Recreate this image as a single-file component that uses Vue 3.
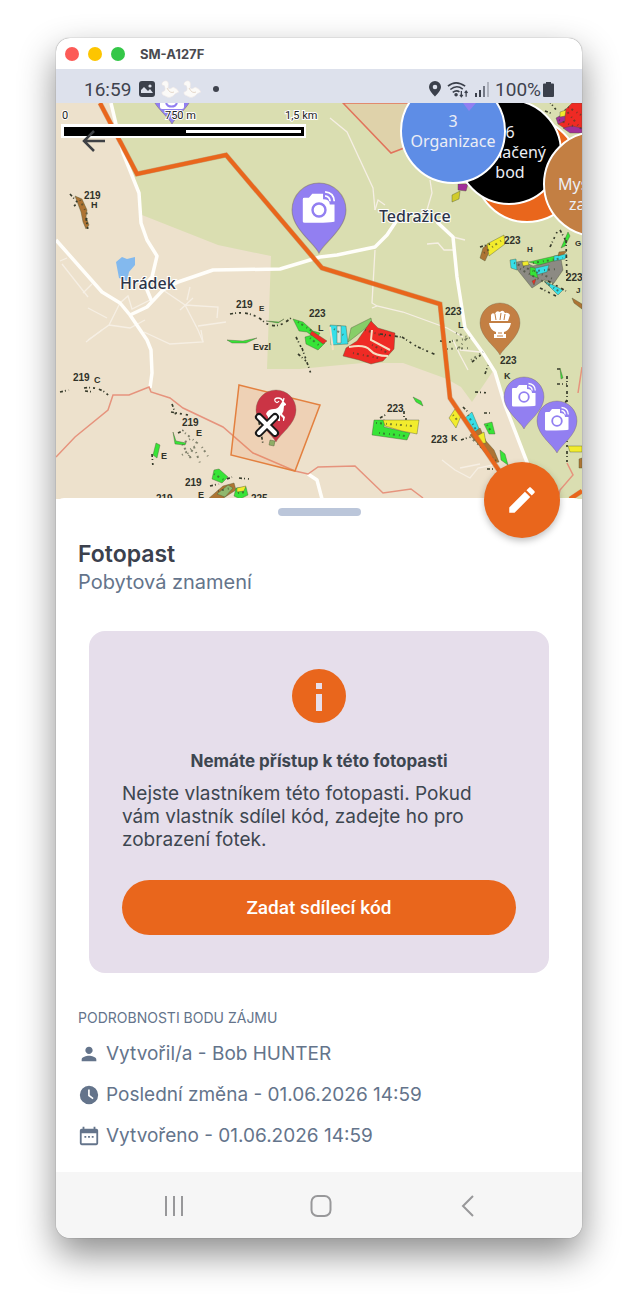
<template>
  <div class="desktop">
    <main class="window">
      <header class="titlebar">
        <span class="light red"></span>
        <span class="light yellow"></span>
        <span class="light green"></span>
        <h1>SM-A127F</h1>
      </header>

      <div class="statusbar">
        <div class="status-group">
          <span>16:59</span>
          <svg width="16" height="16" viewBox="0 0 16 16">
            <rect width="16" height="16" rx="3" fill="#3b404b" />
            <path d="M2 12V9l3-3 4 4 2-2 3 4z" fill="#dde1ec" />
            <circle cx="11" cy="5" r="1.6" fill="#dde1ec" />
          </svg>
          <svg v-for="n in 2" :key="n" class="bird" width="18" height="18" viewBox="0 0 18 18">
            <path d="M1 3Q4-1 7 2Q8 4 7 8Q9 10 12 7Q16 8 18 12Q14 13 12 16Q8 19 4 16Q0 15 1 12Q5 11 4 8Q4 5 1 5Z" fill="#fbfaf8" stroke="#ece5e2" stroke-width=".5" />
            <path d="M6 8Q9 14 13 12" fill="none" stroke="#e5d7c9" />
          </svg>
          <span class="dot"></span>
        </div>
        <div class="status-group right">
          <svg width="12" height="16" viewBox="0 0 12 16">
            <path d="M6 0a6 6 0 0 0-6 6c0 4 6 9.500 6 9.500S12 10 12 6a6 6 0 0 0-6-6zm0 8.300a2.300 2.300 0 1 1 0-4.600 2.300 2.300 0 0 1 0 4.600z" fill="#3b404b" />
          </svg>
          <svg width="22" height="17" viewBox="0 0 23 17" fill="none" stroke="#3b404b" stroke-width="1.700">
            <path d="M1 5Q9-2 19 5M3.500 8.500Q10 3 16.500 8M6 11.500Q10 8.500 13 11" />
            <circle cx="9.500" cy="14" r="1" fill="#3b404b" />
            <path d="M15 10v6M13.500 14l1.500 2 1.500-2M20 16v-6M18.500 12l1.500-2 1.500 2" stroke-width="1.300" />
          </svg>
          <svg width="14" height="15" viewBox="0 0 14 15">
            <path d="M0 11h2v4H0zM4 8h2v7H4z" fill="#3b404b" />
            <path d="M8 4h2v11H8z" fill="#747986" />
            <path d="M12 0h2v15h-2z" fill="#b0b4bf" />
          </svg>
          <span>100%</span>
          <svg class="battery" width="11" height="15" viewBox="0 0 11 15">
            <path d="M3 0h5v1.500h2q1 0 1 1V14q0 1-1 1H1q-1 0-1-1V2.500q0-1 1-1h2z" fill="#3b404b" />
          </svg>
        </div>
      </div>

      <section class="map">
        <svg class="map-canvas" viewBox="56 103 526 396">
          <rect x="56" y="103" width="526" height="396" fill="#ede1cc" />
          <path d="M111 103 123 153 139 193 142 215 218 245 271 256 267 369 300 369 330 366 363 363 403 363 425 371 447 379 461 387 472 402 493 371 505 405 530 468V499H582V103Z" fill="#dadeb1" />
          <path d="M343 103 391 153 412 145V103Z" fill="#dfd3aa" stroke="#e2745c" stroke-width="1.500" />

          <g fill="none" stroke="#f6efe4" stroke-width="1.300">
            <path v-for="d in lanes" :key="d" :d="d" />
          </g>
          <g fill="none" stroke="#fffefa" stroke-width="3.500" stroke-linejoin="round">
            <path v-for="d in roads" :key="d" :d="d" />
          </g>
          <g fill="none" stroke="#e6937d" stroke-width="1.500">
            <path v-for="d in borders" :key="d" :d="d" />
          </g>
          <path d="M116 262 122 257 127 259 135 257 135 265 129 272 127 281 119 278Z" fill="#83b9ee" />
          <path d="M239 385 320 405 295 471 231 455Z" fill="#f08040" fill-opacity=".16" stroke="#e3803f" stroke-width="1.500" />

          <!-- forest stands -->
          <path v-for="s in stands" :key="s.d" :d="s.d" :fill="s.fill" stroke="#4b5535" stroke-width=".4" />
          <g fill="none" stroke="#373b2b">
            <path v-for="d in ticks" :key="d" :d="d" stroke-width="1.700" stroke-dasharray="3 2 1 3 2 4" />
          </g>
          <g fill="none" stroke="#37402b" opacity=".6">
            <path v-for="d in specks" :key="d" :d="d" stroke-width="2" stroke-dasharray="1 3 2 4" />
          </g>
          <path d="M349 347Q365 344 370 350T388 356M372 330 371 340 390 350M330 327 333 350" fill="none" stroke="#f6dfc2" stroke-width="2" />

          <g class="stand-label">
            <text v-for="(l, i) in labels" :key="i" :x="l[0]" :y="l[1]" :font-size="l[3] || 10">{{ l[2] }}</text>
          </g>

          <path d="M100 103 137 174 226 155 322 268 440 304 450 398 500 472M570 499 582 491" fill="none" stroke="#b9673a" stroke-width="5" opacity=".5" />
          <path d="M100 103 137 174 226 155 322 268 440 304 450 398 500 472M570 499 582 491" fill="none" stroke="#e9661c" stroke-width="4" />

          <g class="town">
            <text x="120" y="289">Hrádek</text>
            <text x="379" y="222">Tedražice</text>
          </g>

          <g v-for="(p, i) in pins" :key="'p' + i" :transform="`translate(${p.x} ${p.y}) scale(${p.scale})`">
            <path d="M0 32C-3 25-20 14-20 0A20 20 0 0 1 20 0C20 14 3 25 0 32Z" :fill="p.color" stroke="#76684f" stroke-opacity=".45" stroke-width=".8" />
            <g v-if="p.kind === 'camera'">
              <path d="M-11-9H-7.500L-5-12H3V-8Q8-8 8-4H11.500V8.500Q11.500 9.500-10.500 9.500-12 9.500-12 8.500V-8Q-12-9-11-9Z" fill="#fff" />
              <circle r="4.800" fill="#fff" :stroke="p.color" stroke-width="1.800" />
              <path d="M4.500-10.500Q8-10 8.200-6.500M4.500-13.500Q11-13 11.300-6.500" fill="none" stroke="#fff" stroke-width="1.300" />
            </g>
            <g v-else-if="p.kind === 'bowl'">
              <path d="M-11 0H11Q10 7 4 9V11H6V15H-6V11H-4V9Q-10 7-11 0Z" fill="#fff" />
              <path d="M-9-2V-8Q-8-11-5-9-4-13 0-11 3-14 5-10 8-11 10-8L8-2Z" fill="#fff" />
              <path d="M-5-9-4-3M1-10 0-3M5-9 4-3M-3 13H3M-2 10H2" fill="none" :stroke="p.color" />
            </g>
            <g v-else-if="p.kind === 'goat'">
              <path d="M-9 2Q-7-1-2-1 2-1 4-5L6-8 8-8 10-6 10-5 8-4Q8 1 6 4L9 7 8 11H7L7 8 4 5 4 11H2L1 5H-5L-6 8-6 12H-8L-8 7-10 4Z" fill="#fff" />
              <path d="M7-8Q6-12 2-12-2-12-1-9 1-6 3-9M7-8 8-12" fill="none" stroke="#fff" stroke-width="1.300" />
            </g>
          </g>
          <rect x="160" y="98" width="24" height="11" rx="2" fill="#fff" />
          <path d="M166 103A6 6 0 0 0 177 103" fill="none" stroke="#927ff1" stroke-width="2" />

          <path d="M259 417 275 433M275 417 259 433" stroke="#181818" stroke-width="8" stroke-linecap="round" />
          <path d="M259 417 275 433M275 417 259 433" stroke="#fff" stroke-width="4" stroke-linecap="round" />

          <g class="cluster">
            <circle cx="527" cy="170" r="52" fill="#e9661c" />
            <circle cx="509" cy="152" r="52" fill="#000" />
            <text x="510" y="138" text-anchor="middle">6</text>
            <text x="546" y="158" text-anchor="end">načený</text>
            <text x="510" y="178" text-anchor="middle">bod</text>
            <circle cx="453" cy="131" r="52" fill="#5e8de6" />
            <text x="453" y="127" text-anchor="middle">3</text>
            <text x="453" y="147" text-anchor="middle">Organizace</text>
            <circle cx="596" cy="184" r="52" fill="#c37f43" />
            <text x="558" y="190">Mys</text>
            <text x="569" y="210">za</text>
          </g>
          <path d="M463 103H476L469 111Z" fill="#927ff1" />

          <!-- scale -->
          <g class="scale-text">
            <text x="62" y="119">0</text>
            <text x="165" y="119">750 m</text>
            <text x="285" y="119">1,5 km</text>
          </g>
          <path d="M61 124H306V138H61Z" fill="#fff" />
          <path d="M64 127H304V136H64Z" fill="#000" />
          <path d="M186 130H301V133H186Z" fill="#fff" />
        </svg>
        <button class="back" aria-label="Zpět">
          <svg width="24" height="24" viewBox="0 0 24 24" fill="none" stroke="#3f4145" stroke-width="2.500">
            <path d="M23 12H2M12 2 2 12 12 22" />
          </svg>
        </button>
      </section>

      <section class="sheet">
        <span class="handle"></span>
        <button class="edit" aria-label="Upravit">
          <svg width="34" height="34" viewBox="0 0 24 24" fill="#fff">
            <path d="M3 17.250V21h3.750L17.810 9.940l-3.750-3.750zM20.710 7.040c.39-.39.39-1.020 0-1.410l-2.340-2.340c-.39-.39-1.020-.39-1.410 0l-1.830 1.830 3.750 3.750z" />
          </svg>
        </button>

        <h2>Fotopast</h2>
        <p class="subtitle">Pobytová znamení</p>

        <div class="card">
          <svg class="info" width="54" height="54" viewBox="0 0 54 54">
            <circle cx="27" cy="27" r="27" fill="#e9661c" />
            <path d="M24 14h6v6h-6zM24 25h6v17h-6z" fill="#e6deeb" />
          </svg>
          <h3>Nemáte přístup k této fotopasti</h3>
          <p>Nejste vlastníkem této fotopasti. Pokud vám vlastník sdílel kód, zadejte ho pro zobrazení fotek.</p>
          <button class="share">Zadat sdílecí kód</button>
        </div>

        <h4>PODROBNOSTI BODU ZÁJMU</h4>
        <ul class="details">
          <li v-for="row in details" :key="row.text">
            <svg width="22" height="22" viewBox="0 0 24 24" fill="#64748b">
              <path fill-rule="evenodd" :d="row.icon" />
            </svg>
            <span>{{ row.text }}</span>
          </li>
        </ul>
      </section>

      <nav class="navbar">
        <button aria-label="Poslední aplikace">
          <svg width="24" height="24" viewBox="0 0 24 24"><path d="M4 2v20M12 2v20M20 2v20" /></svg>
        </button>
        <button aria-label="Domů">
          <svg width="24" height="24" viewBox="0 0 24 24"><rect x="2.500" y="2" width="19" height="20" rx="6" /></svg>
        </button>
        <button aria-label="Zpět">
          <svg width="24" height="24" viewBox="0 0 24 24"><path d="M17 2 7 12 17 22" /></svg>
        </button>
      </nav>
    </main>
  </div>
</template>

<script setup>
const details = [
  {
    text: 'Vytvořil/a - Bob HUNTER',
    icon: 'M12 12c2.210 0 4-1.790 4-4s-1.790-4-4-4-4 1.790-4 4 1.790 4 4 4zm0 2c-2.670 0-8 1.340-8 4v2h16v-2c0-2.660-5.330-4-8-4z'
  },
  {
    text: 'Poslední změna - 01.06.2026 14:59',
    icon: 'M12 2a10 10 0 1 0 0 20 10 10 0 0 0 0-20zM11 6h1.800v6l4.200 3.200-1 1.500L11 13z'
  },
  {
    text: 'Vytvořeno - 01.06.2026 14:59',
    icon: 'M5 2h2v2h10V2h2v2h1q2 0 2 2v14q0 2-2 2H4q-2 0-2-2V6q0-2 2-2h1zM4 9v11h16V9zM7 12h2v2H7zM11 12h2v2h-2zM15 12h2v2h-2z'
  }
]

const roads = [
  'M111 103 115 120 123 153 133 178 139 193 141 223 147 240 157 256 152 277 145 285 152 302',
  'M56 240 102 292 120 303 130 315 147 340 151 350 152 373 150 388',
  'M130 315 147 307 163 290 178 282 213 270 280 269 320 257 337 255 375 247 387 235 397 220',
  'M437 222 453 237 457 277 465 328 483 353 495 372 505 405 530 470',
  'M308 474 317 480 322 499'
]

const lanes = [
  'M330 118 347 132 373 188 375 210',
  'M430 180 432 193 427 210',
  'M375 250 372 303 377 306 403 312 447 328 463 337',
  'M372 308 377 306M427 244 438 243 444 250 455 250M453 237 465 240',
  'M60 261 67 258M62 264 88 297M83 293 92 284',
  'M120 303 109 325 88 340M109 325 130 328 145 320M88 308 107 318',
  'M120 303 128 296 132 309 150 300',
  'M163 290 185 305 198 330 203 342M185 305 218 307 217 318M198 326 226 322M180 310 193 298 M187 300 190 287',
  'M86 342 102 330M144 332 170 344 203 342 201 330',
  'M442 460 455 470 470 478 478 468 493 465M460 468 480 464',
  'M453 340 460 355 468 370M460 350 480 352',
  'M375 210 378 200 385 205'
]

const borders = [
  'M56 457 75 437 108 410 113 395 129 395 149 387 151 392 170 398 183 408 223 427 253 453 295 471 308 474 318 467 355 466 383 493 411 489 423 498',
  'M582 367 578 393M567 463 573 475 560 490 558 498'
]

const green = '#37e437'
const cyan = '#35dfe8'
const yellow = '#f2ec2d'
const red = '#ef2b25'
const gray = '#8c8a83'
const brown = '#ad7434'

const stands = [
  { d: 'M75 196 82 199 87 210 86 217 89 225 86 229 83 222 81 212Z', fill: brown },
  { d: 'M293 319 303 322 313 331 320 333 316 339 307 332 299 331Z', fill: green },
  { d: 'M305 337 316 334 325 343 318 350 306 344Z', fill: green },
  { d: 'M312 331 327 341 323 344 310 334Z', fill: red },
  { d: 'M330 325 346 326 348 344 331 345Z', fill: cyan },
  { d: 'M348 342 351 328 371 318 372 323 356 336Z', fill: '#87ce68' },
  { d: 'M371 321 378 328 395 333 394 349 383 361 371 364 359 360 343 356 346 348 357 341Z', fill: red },
  { d: 'M337 326 341 326 341 343 337 343Z', fill: '#dce9db' },
  { d: 'M227 340 243 341 257 338 246 343 232 343Z', fill: green },
  { d: 'M266 321 279 322 284 319 278 323Z', fill: green },
  { d: 'M173 432 176 441 186 443 185 445 175 444Z', fill: green },
  { d: 'M156 443 160 445 157 458 153 455Z', fill: green },
  { d: 'M214 470 219 469 228 477 222 483 212 479Z', fill: green },
  { d: 'M208 499 223 486 234 483 236 490 222 499Z', fill: brown },
  { d: 'M217 494 228 485 233 488 225 497Z', fill: '#8fb86e' },
  { d: 'M236 488 246 487 248 495 240 499 234 496Z', fill: green },
  { d: 'M237 488 246 486 244 491 237 492Z', fill: yellow },
  { d: 'M374 420 385 420 384 427 410 433 407 440 372 435Z', fill: green },
  { d: 'M383 420 419 420 417 434 402 431 385 426Z', fill: yellow },
  { d: 'M413 397 421 401 423 406 416 402Z', fill: green },
  { d: 'M449 418 455 409 461 416 456 428Z', fill: yellow },
  { d: 'M465 418 472 412 480 431 473 435Z', fill: cyan },
  { d: 'M484 424 492 422 495 434 489 434Z', fill: green },
  { d: 'M470 435 480 428 486 441 494 450 499 462 493 463 478 444Z', fill: brown },
  { d: 'M477 436 484 432 486 443 478 444Z', fill: yellow },
  { d: 'M500 450 505 454 508 465 501 460Z', fill: green },
  { d: 'M568 446 582 446V452H570Z', fill: yellow },
  { d: 'M579 459 582 458V468H579Z', fill: brown },
  { d: 'M560 368 563 378 561 379Z', fill: green },
  { d: 'M483 248 489 243 490 250 485 261 480 258Z', fill: brown },
  { d: 'M487 244 504 235 505 244 489 256Z', fill: yellow },
  { d: 'M512 263 522 261 533 266 561 259 563 270 554 283 544 280 532 288Z', fill: gray },
  { d: 'M510 260 516 259 517 270 511 268Z', fill: cyan },
  { d: 'M529 262 559 255 560 259 539 265Z', fill: green },
  { d: 'M554 256 567 254 565 259 554 261Z', fill: cyan },
  { d: 'M532 269 549 265 547 272 536 275Z', fill: cyan },
  { d: 'M530 267 535 268 538 278 530 275Z', fill: green },
  { d: 'M559 252 567 251 564 254 558 256Z', fill: brown },
  { d: 'M561 248 568 232 570 236 565 246Z', fill: green },
  { d: 'M544 281 553 285 563 290 558 295Z', fill: cyan },
  { d: 'M532 281 536 279 534 285Z', fill: red },
  { d: 'M522 262 528 261 529 265 523 266Z', fill: yellow },
  { d: 'M572 298 582 304V309L574 303Z', fill: brown },
  { d: 'M452 195 460 191 459 199 452 202Z', fill: '#d1cb2b' },
  { d: 'M458 184 468 184 466 191 458 190Z', fill: '#a23099' },
  { d: 'M563 112 572 103H582V132L567 130 558 124Z', fill: red },
  { d: 'M556 118 565 113 565 121 558 124Z', fill: '#a23099' },
  { d: 'M560 112 566 110 565 116 560 117Z', fill: yellow },
  { d: 'M563 128 572 126 582 128V133H570Z', fill: '#a23099' },
  { d: 'M270 440 275 441 274 446 269 445Z', fill: '#8ead65' }
]

const ticks = [
  'M70 194 78 203 74 206M86 218 88 230M230 314Q250 310 263 321T292 317',
  'M84 388Q100 386 109 396M60 392 69 390M85 391 94 392',
  'M296 337 303 351M298 354 306 361M302 348 311 374M380 334 401 337M402 337 416 346M418 347 436 355',
  'M440 341 451 342M472 362 482 354M485 374 488 365M475 392 490 393',
  'M560 369 556 369M557 384 567 384M567 376 567 464M567 400 560 410',
  'M404 411 404 419 408 419M380 418 387 414M463 407 468 412',
  'M461 440 470 437M484 413 491 413M487 469 497 469',
  'M172 404 176 415M171 412 188 415M178 433 186 429',
  'M540 288 556 296M548 281 566 291M566 240 567 282M550 247 557 232',
  'M560 230 566 241M480 247 490 244M549 101 557 111M545 111 553 114',
  'M152 454 153 467M210 486 219 484M227 479 232 477M239 478 249 479M259 422 263 444'
]

const specks = [
  'M80 200 87 214 87 226M298 322 312 331M310 338 321 347M334 329 345 336M353 353 378 358M365 330 387 337M372 345 388 353',
  'M376 423 413 426M379 433 406 436M453 415 458 421M468 415 476 430M487 425 492 433M470 437 496 461',
  'M484 253 502 240M514 263 553 279M520 269 548 284M533 263 563 258M534 271 557 269M545 282 560 292',
  'M185 433 197 443 188 457M182 455 194 447 200 463M190 439 182 444 192 460M202 447 209 458',
  'M452 341 466 339 457 350M456 333 470 338M471 360 483 352M447 349 470 348',
  'M565 109 581 129M568 107 581 115M559 120 573 126M214 474 224 480M218 491 231 488M238 493 247 492'
]

// x, y, text, optional font size
const labels = [
  [84, 199, '219'], [91, 208, 'H', 9], [236, 308, '219'], [259, 311, 'E', 8], [253, 350, 'Evzl', 9],
  [73, 381, '219'], [94, 383, 'C', 9], [182, 426, '219'], [196, 436, 'E', 9], [161, 459, 'E', 9],
  [185, 486, '219'], [198, 498, 'E', 9], [309, 317, '223'], [318, 331, 'L', 9], [445, 315, '223'],
  [458, 328, 'L', 9], [504, 244, '223'], [527, 252, 'H', 8], [566, 281, '223'], [576, 293, 'J', 8],
  [575, 246, 'G', 8], [500, 364, '223'], [504, 379, 'K', 9], [387, 412, '223'], [431, 443, '223'],
  [451, 441, 'K', 9], [156, 502, '219'], [251, 502, '225']
]

const pins = [
  { x: 172, y: 89, scale: 1.1, color: '#927ff1', kind: 'plain' },
  { x: 319, y: 210, scale: 1.35, color: '#927ff1', kind: 'camera' },
  { x: 500, y: 323, scale: 1, color: '#c37f43', kind: 'bowl' },
  { x: 524, y: 397, scale: 1, color: '#927ff1', kind: 'camera' },
  { x: 557, y: 421, scale: 1, color: '#927ff1', kind: 'camera' },
  { x: 276, y: 410, scale: 1, color: '#cb3445', kind: 'goat' }
]
</script>

<style>
body {
  margin: 0;
  background: #fff;
}
</style>

<style scoped>
.desktop {
  padding: 38px 56px 74px;
  font-family: Inter, "Noto Sans", sans-serif;
}

h1, h2, h3, h4, p, ul {
  margin: 0;
  padding: 0;
}

button {
  border: 0;
  padding: 0;
  background: none;
  cursor: pointer;
}

svg {
  display: block;
}

.window {
  display: flex;
  flex-direction: column;
  overflow: hidden;
  border-radius: 14px;
  background: #fff;
  box-shadow: 0 0 1px rgba(0, 0, 0, 0.6), 0 16px 36px rgba(0, 0, 0, 0.45);
}

.titlebar {
  display: flex;
  align-items: center;
  gap: 9px;
  height: 31px;
  padding: 1px 9px 0;
  box-sizing: border-box;
}

.titlebar h1 {
  margin-left: 6px;
  color: #4a4a50;
  font-size: 13px;
  font-weight: 700;
}

.light {
  width: 14px;
  height: 14px;
  border-radius: 50%;
}

.red {
  background: #fc5b57;
}

.yellow {
  background: #fdc500;
}

.green {
  background: #34c748;
}

.statusbar {
  display: flex;
  justify-content: space-between;
  height: 34px;
  padding: 6px 28px 0;
  box-sizing: border-box;
  background: #dde1ec;
  color: #3f434e;
  font-family: Roboto, sans-serif;
  font-size: 19px;
}

.status-group {
  display: flex;
  align-items: center;
  gap: 8px;
}

.bird {
  margin-left: -2px;
}

.bird + .bird {
  margin-left: -4px;
}

.dot {
  width: 6px;
  height: 6px;
  margin-left: 4px;
  border-radius: 50%;
  background: #3f434e;
}

.status-group.right {
  gap: 6px;
}

.battery {
  margin-left: -4px;
}

.map {
  position: relative;
}

.map-canvas {
  width: 100%;
  height: auto;
}

.stand-label {
  fill: #303229;
  font-family: "Liberation Sans", sans-serif;
  font-weight: 700;
}

.town {
  fill: #2d3449;
  stroke: #fff;
  stroke-width: 2px;
  paint-order: stroke;
  font-family: "Noto Sans", sans-serif;
  font-size: 16px;
  font-weight: 500;
}

.cluster {
  font-family: "Noto Sans", sans-serif;
  font-size: 16px;
  fill: #eceef5;
}

.cluster circle {
  stroke: #fff;
  stroke-width: 2px;
}

.scale-text {
  fill: #222;
  stroke: #fff;
  stroke-width: 2px;
  paint-order: stroke;
  font-family: Roboto, sans-serif;
  font-size: 11px;
}

.back {
  position: absolute;
  top: 26px;
  left: 26px;
}

.sheet {
  position: relative;
  display: flex;
  flex-direction: column;
  margin-top: -1px;
  padding: 10px 22px 22px;
  border-radius: 8px 8px 0 0;
  background: #fff;
  color: #64748b;
}

.handle {
  align-self: center;
  width: 83px;
  height: 8px;
  border-radius: 4px;
  background: #bbc6da;
}

.edit {
  position: absolute;
  top: -36px;
  right: 22px;
  display: flex;
  align-items: center;
  justify-content: center;
  width: 76px;
  height: 76px;
  border-radius: 50%;
  background: #e9661c;
  box-shadow: 0 3px 7px rgba(0, 0, 0, 0.25);
}

.sheet h2 {
  margin-top: 24px;
  color: #3b414d;
  font-size: 23px;
  font-weight: 600;
  line-height: 28px;
}

.subtitle {
  font-size: 20px;
  line-height: 28px;
}

.card {
  display: flex;
  flex-direction: column;
  margin: 35px 11px 0;
  padding: 38px 33px;
  border-radius: 16px;
  background: #e6deeb;
  color: #3d4650;
}

.info {
  align-self: center;
}

.card h3 {
  margin-top: 26px;
  font-size: 17px;
  font-weight: 700;
  line-height: 24px;
  text-align: center;
}

.card p {
  margin-top: 9px;
  padding-right: 16px;
  font-size: 19px;
  line-height: 23px;
}

.share {
  height: 55px;
  margin-top: 29px;
  border-radius: 28px;
  background: #e9661c;
  color: #fff;
  font-family: Roboto, sans-serif;
  font-size: 19px;
  font-weight: 500;
}

.sheet h4 {
  margin-top: 36px;
  font-size: 14px;
  font-weight: 400;
  line-height: 18px;
}

.details {
  display: flex;
  flex-direction: column;
  gap: 13px;
  margin-top: 13px;
  list-style: none;
}

.details li {
  display: flex;
  align-items: center;
  gap: 6px;
  font-size: 19px;
  line-height: 28px;
}

.navbar {
  display: grid;
  grid-template-columns: repeat(3, 1fr);
  height: 66px;
  padding: 2px 41px 0 44px;
  box-sizing: border-box;
  background: #f6f6f6;
}

.navbar button {
  display: flex;
  align-items: center;
  justify-content: center;
}

.navbar svg {
  fill: none;
  stroke: #98989a;
  stroke-width: 2px;
}
</style>
